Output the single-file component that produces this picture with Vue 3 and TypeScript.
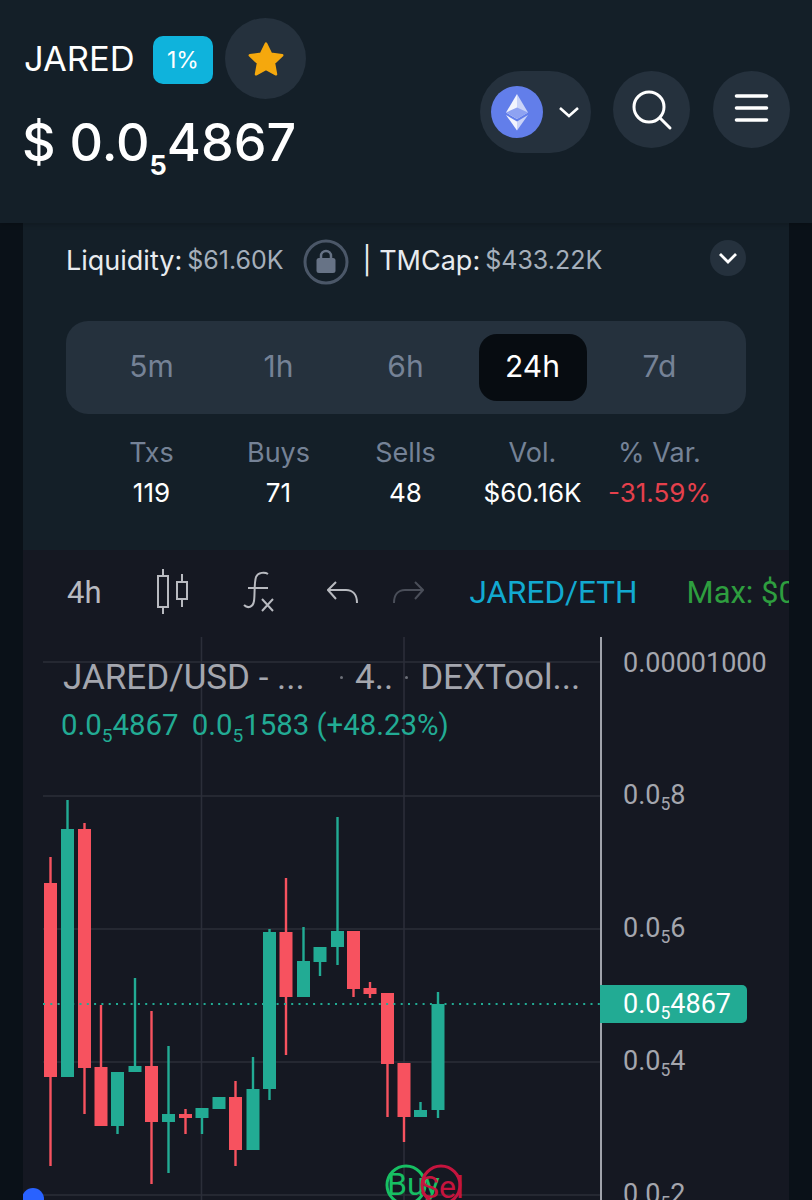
<script setup lang="ts">
interface Candle {
  x: number;
  high: number;
  top: number;
  bottom: number;
  low: number;
  up: boolean;
}

interface AxisLabel {
  y: number;
  head: string;
  sub?: string;
  tail?: string;
}

const periods = ['5m', '1h', '6h', '24h', '7d'];
const activePeriod = '24h';

const stats = [
  { label: 'Txs', value: '119' },
  { label: 'Buys', value: '71' },
  { label: 'Sells', value: '48' },
  { label: 'Vol.', value: '$60.16K' },
  { label: '% Var.', value: '-31.59%', negative: true }
];

const CANDLE_WIDTH = 13;
const WICK_WIDTH = 2.4;

// Candles are stored in chart pixels, oldest first
const candles: Candle[] = [
  { x: 50.5, high: 857, top: 883, bottom: 1077, low: 1166, up: false },
  { x: 67.5, high: 800, top: 829, bottom: 1077, low: 1077, up: true },
  { x: 84.5, high: 823, top: 829, bottom: 1068, low: 1114, up: false },
  { x: 101, high: 1005, top: 1067, bottom: 1126, low: 1126, up: false },
  { x: 117.5, high: 1072, top: 1072, bottom: 1126, low: 1134, up: true },
  { x: 135, high: 978, top: 1066, bottom: 1072, low: 1072, up: true },
  { x: 151.5, high: 1011, top: 1066, bottom: 1122, low: 1184, up: false },
  { x: 168.5, high: 1046, top: 1114, bottom: 1122, low: 1173, up: true },
  { x: 185.5, high: 1109, top: 1114, bottom: 1118, low: 1134, up: false },
  { x: 202, high: 1108, top: 1108, bottom: 1118, low: 1134, up: true },
  { x: 219, high: 1097, top: 1097, bottom: 1109, low: 1109, up: true },
  { x: 235.5, high: 1081, top: 1097, bottom: 1150, low: 1166, up: false },
  { x: 253, high: 1057, top: 1089, bottom: 1150, low: 1150, up: true },
  { x: 269.5, high: 929, top: 932, bottom: 1089, low: 1100, up: true },
  { x: 286, high: 878, top: 932, bottom: 997, low: 1055, up: false },
  { x: 303.5, high: 927, top: 961, bottom: 997, low: 997, up: true },
  { x: 320, high: 947, top: 947, bottom: 962, low: 976, up: true },
  { x: 337.5, high: 817, top: 931, bottom: 947, low: 965, up: true },
  { x: 353.5, high: 931, top: 931, bottom: 989, low: 997, up: false },
  { x: 370, high: 982, top: 988, bottom: 994, low: 998, up: false },
  { x: 387.5, high: 993, top: 993, bottom: 1064, low: 1117, up: false },
  { x: 404, high: 1063, top: 1063, bottom: 1117, low: 1142, up: false },
  { x: 420.5, high: 1102, top: 1110, bottom: 1117, low: 1117, up: true },
  { x: 438, high: 992, top: 1004, bottom: 1110, low: 1118, up: true }
];

const gridRows = [662, 796, 929, 1062, 1195];
const gridColumns = [201.5, 404];

const axisLabels: AxisLabel[] = [
  { y: 663, head: '0.00001000' },
  { y: 795, head: '0.0', sub: '5', tail: '8' },
  { y: 928, head: '0.0', sub: '5', tail: '6' },
  { y: 1061, head: '0.0', sub: '5', tail: '4' },
  { y: 1194, head: '0.0', sub: '5', tail: '2' }
];

const CANVAS_TOP = 637;
</script>

<template>
  <div class="page">
    <!-- 顶部代币信息 -->
    <header class="topbar">
      <div class="token">
        <div class="token-head">
          <span class="token-name">JARED</span>
          <span class="fee-badge">1%</span>
          <button class="round-btn star-btn">
            <svg viewBox="0 0 40 40" width="40" height="40">
              <path
                d="M20 4.5l5 10.3 11.2 1.5-8.2 7.8 2 11.2-10-5.4-10 5.4 2-11.2-8.2-7.8L15 14.8z"
                fill="#f5a80d"
                stroke="#f5a80d"
                stroke-width="2.5"
                stroke-linejoin="round"
              />
            </svg>
          </button>
        </div>
        <div class="token-price">$ 0.0<span class="price-sub">5</span>4867</div>
      </div>

      <div class="actions">
        <button class="chain-btn">
          <span class="eth-coin">
            <svg viewBox="0 0 52 52" width="52" height="52">
              <path d="M26 8l-11 18.5 11 6.5z" fill="#f2f4fd" />
              <path d="M26 8l11 18.5-11 6.5z" fill="#c9d3f8" />
              <path d="M15 26.5l11-5 11 5-11 6.5z" fill="#8ea2f2" />
              <path d="M15 29l11 15.500v-9z" fill="#f2f4fd" />
              <path d="M37 29l-11 15.500v-9z" fill="#c9d3f8" />
            </svg>
          </span>
          <svg class="chain-chevron" viewBox="0 0 22 14" width="22" height="14">
            <path d="M2 3l9 8 9-8" fill="none" stroke="#fff" stroke-width="2.6" />
          </svg>
        </button>
        <button class="round-btn icon-btn">
          <svg viewBox="0 0 77 77" width="77" height="77">
            <circle cx="36" cy="36" r="15" fill="none" stroke="#fff" stroke-width="3" />
            <path d="M47 47l10 10" stroke="#fff" stroke-width="3" stroke-linecap="round" />
          </svg>
        </button>
        <button class="round-btn icon-btn">
          <svg viewBox="0 0 77 77" width="77" height="77">
            <path
              d="M23.5 25h30M23.5 37h30M23.5 49h30"
              stroke="#fff"
              stroke-width="3.6"
              stroke-linecap="round"
            />
          </svg>
        </button>
      </div>
    </header>

    <main class="content">
      <section class="summary">
        <div class="liquidity-row">
          <span class="metric-name">Liquidity:</span>
          <span class="metric-value">$61.60K</span>
          <svg class="lock" viewBox="0 0 46 46" width="46" height="46">
            <circle cx="23" cy="23" r="21" fill="none" stroke="#4b5768" stroke-width="3" />
            <path d="M18 20v-3a5 5 0 0 1 10 0v3" fill="none" stroke="#677386" stroke-width="2.5" />
            <rect x="13.5" y="19" width="19" height="15" rx="2.5" fill="#677386" />
          </svg>
          <span class="metric-name">| TMCap:</span>
          <span class="metric-value">$433.22K</span>
          <button class="expand-btn">
            <svg viewBox="0 0 36 36" width="36" height="36">
              <path d="M10 14l8 8 8-8" fill="none" stroke="#fff" stroke-width="2.8" />
            </svg>
          </button>
        </div>

        <div class="period-tabs">
          <button
            v-for="period in periods"
            :key="period"
            class="period-tab"
            :class="{ active: period === activePeriod }"
          >
            {{ period }}
          </button>
        </div>

        <div class="stats">
          <div v-for="stat in stats" :key="stat.label" class="stat">
            <span class="stat-label">{{ stat.label }}</span>
            <span class="stat-value" :class="{ negative: stat.negative }">{{ stat.value }}</span>
          </div>
        </div>
      </section>

      <!-- K 线图 -->
      <section class="chart">
        <div class="toolbar">
          <span class="tool-text">4h</span>
          <svg viewBox="154 570 37 46" width="37" height="46" class="tool-icon">
            <g fill="none" stroke="#b8bac0" stroke-width="2">
              <rect x="158" y="577" width="10" height="31" />
              <path d="M163 570v7M163 608v7" />
              <rect x="177" y="583" width="10" height="17" />
              <path d="M182 575v8M182 600v8" />
            </g>
          </svg>
          <svg viewBox="243 570 32 44" width="32" height="44" class="tool-icon">
            <g fill="none" stroke="#b8bac0" stroke-width="2">
              <path d="M268 574c-3-2-10-2-12 3-2 6-1 18-2 24-1 6-6 8-10 4" />
              <path d="M248 588h20" />
              <path d="M262 599l11 12M273 599l-11 12" />
            </g>
          </svg>
          <div class="history">
            <svg viewBox="326 578 33 28" width="33" height="28">
              <path
                d="M335 582l-8 8 8 9M328 590h17c7 0 11 5 11 13"
                fill="none"
                stroke="#b8bac0"
                stroke-width="2"
              />
            </svg>
            <svg class="redo" viewBox="326 578 33 28" width="33" height="28">
              <path
                d="M335 582l-8 8 8 9M328 590h17c7 0 11 5 11 13"
                fill="none"
                stroke="#4a4e59"
                stroke-width="2"
              />
            </svg>
          </div>
          <span class="pair">JARED/ETH</span>
          <span class="max">Max: $0.00</span>
        </div>

        <div class="canvas">
          <svg class="plot" viewBox="23 637 766 563" width="766" height="563">
            <g stroke="#2b2e39" stroke-width="1.6">
              <line v-for="y in gridRows" :key="y" x1="43" x2="600" :y1="y" :y2="y" />
              <line v-for="x in gridColumns" :key="x" :x1="x" :x2="x" y1="637" y2="1200" />
            </g>

            <g v-for="candle in candles" :key="candle.x" :fill="candle.up ? '#22ab94' : '#f7525f'">
              <rect
                :x="candle.x - WICK_WIDTH / 2"
                :y="candle.high"
                :width="WICK_WIDTH"
                :height="candle.low - candle.high"
              />
              <rect
                :x="candle.x - CANDLE_WIDTH / 2"
                :y="candle.top"
                :width="CANDLE_WIDTH"
                :height="candle.bottom - candle.top"
              />
            </g>

            <line
              x1="43"
              x2="600"
              y1="1004"
              y2="1004"
              stroke="#22ab94"
              stroke-width="2"
              stroke-dasharray="2 5.3"
            />
            <line x1="601" x2="601" y1="637" y2="1200" stroke="#a0a3ab" stroke-width="2" />

            <!-- 买卖标记 -->
            <circle cx="406" cy="1185" r="19" fill="none" stroke="#17bf63" stroke-width="3" />
            <text x="387" y="1195" class="mark buy">Buy</text>
            <circle cx="441" cy="1185" r="19" fill="none" stroke="#c5143e" stroke-width="3" />
            <text x="420" y="1198" class="mark sell">Sel</text>
            <circle cx="33" cy="1199" r="11" fill="#2962ff" />
          </svg>

          <div class="legend">
            <div class="legend-title">
              <span class="legend-name">JARED/USD - ...</span>
              <i class="legend-dot"></i>
              <span>4..</span>
              <i class="legend-dot"></i>
              <span>DEXTool...</span>
            </div>
            <div class="legend-values">
              <span>0.0<span class="tick-sub">5</span>4867</span>
              <span>0.0<span class="tick-sub">5</span>1583 (+48.23%)</span>
            </div>
          </div>

          <span
            v-for="label in axisLabels"
            :key="label.y"
            class="axis-label"
            :style="{ top: `${label.y - CANVAS_TOP - 20}px` }"
          >
            {{ label.head }}<span v-if="label.sub" class="tick-sub">{{ label.sub }}</span>{{ label.tail }}
          </span>

          <span class="price-tag">0.0<span class="tick-sub">5</span>4867</span>
        </div>
      </section>
    </main>
  </div>
</template>

<style>
html,
body {
  margin: 0;
  background: #0a1118;
}
</style>

<style scoped>
.page {
  width: 812px;
  height: 1200px;
  overflow: hidden;
  background: #0a1118;
  font-family: Inter, 'Open Sans', sans-serif;
  color: #fff;
}

button {
  border: none;
  padding: 0;
  color: inherit;
  font: inherit;
}

/* ==================== 顶栏 ==================== */
.topbar {
  position: relative;
  z-index: 1;
  box-sizing: border-box;
  height: 223px;
  padding: 18px 22px 0 24px;
  display: flex;
  justify-content: space-between;
  background: #141f28;
  box-shadow: 0 2px 5px rgba(0, 0, 0, 0.18);
}

.token-head {
  display: flex;
  align-items: center;
}

.token-name {
  width: 129px;
  font-size: 34.5px;
}

.fee-badge {
  width: 60px;
  height: 48px;
  margin-top: 3px;
  border-radius: 10px;
  display: flex;
  align-items: center;
  justify-content: center;
  background: #0fb3dc;
  font-size: 23px;
}

.round-btn {
  display: flex;
  align-items: center;
  justify-content: center;
  border-radius: 50%;
  background: #25313d;
}

.star-btn {
  width: 81px;
  height: 81px;
  margin-left: 12px;
}

.token-price {
  margin-top: 14px;
  margin-left: -2px;
  font-size: 52px;
  line-height: 60px;
  font-weight: 500;
}

.price-sub {
  font-size: 27px;
  font-weight: 700;
  line-height: 0;
  vertical-align: -0.5em;
}

.actions {
  display: flex;
  align-items: flex-start;
  gap: 23px;
  margin-top: 53px;
}

.chain-btn {
  width: 111px;
  height: 82px;
  margin-right: -1px;
  padding-left: 11px;
  box-sizing: border-box;
  border-radius: 41px;
  display: flex;
  align-items: center;
  gap: 15px;
  background: #25313d;
}

.eth-coin {
  width: 52px;
  height: 52px;
  border-radius: 50%;
  background: #627eea;
  display: block;
}

.eth-coin svg,
.chain-chevron {
  display: block;
}

.icon-btn {
  width: 77px;
  height: 77px;
}

/* ==================== 流动性 / 周期 ==================== */
.content {
  margin: 0 23px;
}

.summary {
  box-sizing: border-box;
  height: 327px;
  padding: 16px 43px 0;
  background: #141f28;
}

.liquidity-row {
  height: 42px;
  display: flex;
  align-items: center;
  white-space: nowrap;
}

.metric-name {
  color: #e8ebef;
  font-size: 27px;
}

.metric-value {
  margin-left: 5px;
  color: #a5afbb;
  font-size: 25px;
}

.lock {
  margin: 4px 14px 0 19px;
  flex-shrink: 0;
}

.expand-btn {
  margin-left: auto;
  width: 36px;
  height: 36px;
  margin-top: -4px;
  border-radius: 50%;
  background: #25313d;
}

.expand-btn svg {
  display: block;
}

.period-tabs {
  margin-top: 40px;
  height: 93px;
  box-sizing: border-box;
  padding: 0 22px;
  display: grid;
  grid-template-columns: repeat(5, 127px);
  align-items: center;
  justify-items: center;
  border-radius: 22px;
  background: #25313d;
}

.period-tab {
  width: 108px;
  height: 67px;
  padding-bottom: 3px;
  border-radius: 18px;
  background: transparent;
  color: #758296;
  font-size: 30px;
}

.period-tab.active {
  background: #070c11;
  color: #fff;
}

.stats {
  margin-top: 19px;
  padding: 0 22px;
  display: grid;
  grid-template-columns: repeat(5, 127px);
}

.stat {
  display: flex;
  flex-direction: column;
  align-items: center;
  line-height: 40px;
  white-space: nowrap;
}

.stat-label {
  color: #758296;
  font-size: 27px;
}

.stat-value {
  font-size: 26px;
}

.stat-value.negative {
  color: #e5404c;
}

/* ==================== 图表 ==================== */
.chart {
  height: 650px;
  background: #151822;
  font-family: Roboto, sans-serif;
  overflow: hidden;
}

.toolbar {
  box-sizing: border-box;
  height: 87px;
  padding: 0 0 3px 44px;
  display: flex;
  align-items: center;
  gap: 52px;
  white-space: nowrap;
  font-size: 31px;
  overflow: hidden;
}

.tool-text {
  color: #b8bac0;
}

.tool-icon {
  flex-shrink: 0;
}

.history {
  display: flex;
  gap: 31px;
  flex-shrink: 0;
}

.redo {
  transform: scaleX(-1);
}

.pair {
  margin-left: -6px;
  font-size: 31.5px;
  color: #12a9d1;
}

.max {
  margin-left: -3px;
  color: #2e9e3f;
}

.canvas {
  position: relative;
  height: 563px;
  overflow: hidden;
}

.plot {
  position: absolute;
  inset: 0;
  display: block;
}

.mark {
  font-family: Roboto, sans-serif;
  font-size: 32px;
}

.mark.buy {
  fill: #17bf63;
}

.mark.sell {
  fill: #c5143e;
}

.legend {
  position: absolute;
  left: 40px;
  top: 16px;
  white-space: nowrap;
}

.legend-title {
  display: flex;
  align-items: center;
  gap: 12px;
  height: 48px;
  font-size: 35px;
  color: #a4a6ae;
}

.legend-name {
  width: 265px;
}

.legend-dot {
  width: 3px;
  height: 3px;
  border-radius: 50%;
  background: #6d7079;
}

.legend-values {
  display: flex;
  gap: 13px;
  margin-left: -2px;
  line-height: 48px;
  font-size: 29.4px;
  color: #22ab94;
}

.tick-sub {
  font-size: 0.65em;
  line-height: 0;
  vertical-align: -0.35em;
}

.axis-label {
  position: absolute;
  left: 600px;
  line-height: 40px;
  font-size: 27px;
  color: #a4a6ae;
  white-space: nowrap;
}

.price-tag {
  position: absolute;
  left: 577px;
  top: 348px;
  box-sizing: border-box;
  width: 147px;
  height: 38px;
  padding-left: 23px;
  line-height: 38px;
  font-size: 27px;
  color: #fff;
  background: #22ab94;
  border-radius: 0 5px 5px 0;
  white-space: nowrap;
}
</style>
